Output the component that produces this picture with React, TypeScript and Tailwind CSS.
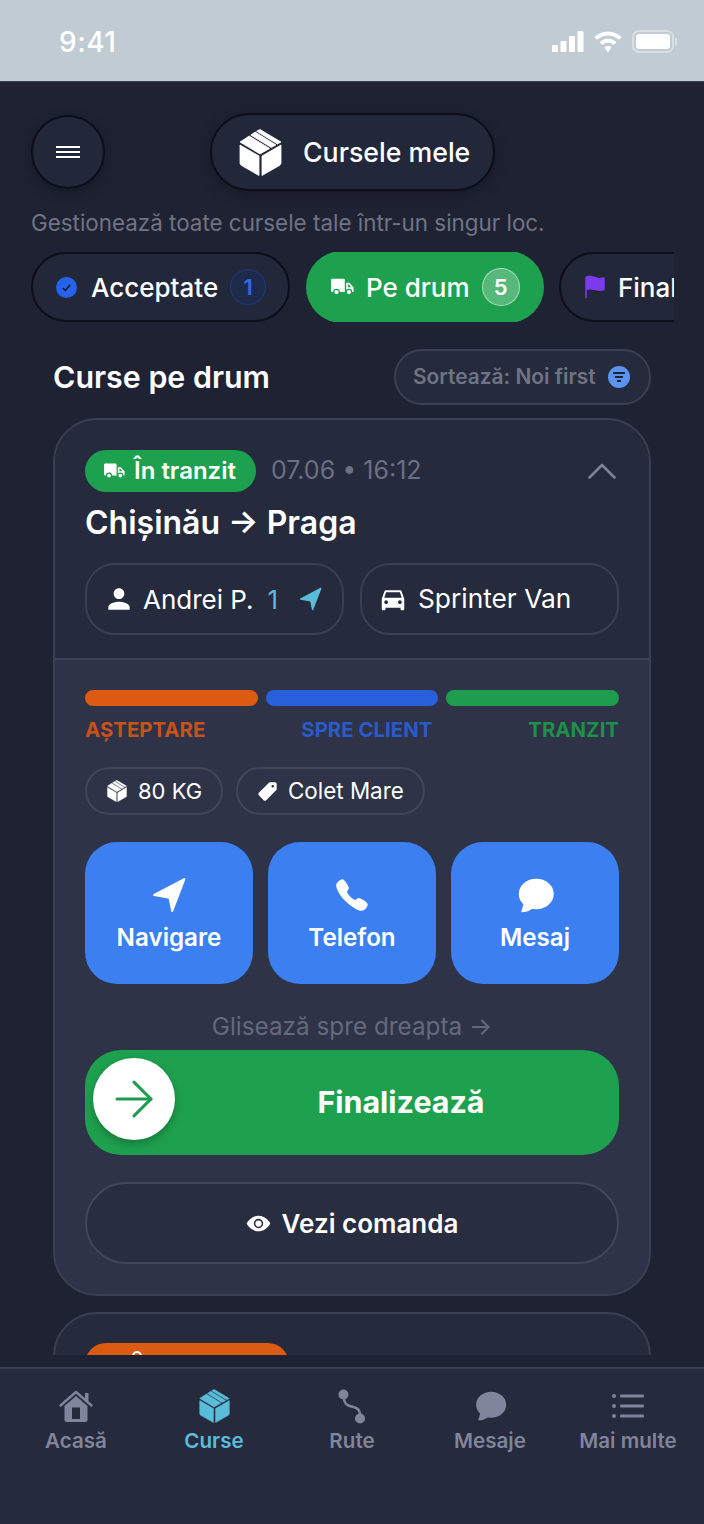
import React from 'react';
import { ArrowRight } from 'lucide-react';
import { IoCall, IoEye, IoFlag, IoPricetag } from 'react-icons/io5';
import { MdDirectionsCar, MdPerson } from 'react-icons/md';

const BoxIcon = ({ className }: { className?: string }) => (
  <svg viewBox="0 0 43 47" className={className} fill="currentColor" stroke="currentColor" strokeWidth="0.8" strokeLinejoin="round">
    <path d="M21 0.5 L42 13 L38.4 15 L17.6 2.2 Z" />
    <path d="M16.2 3.1 L37 15.9 L32.3 18.500 L11.800 6 Z" />
    <path d="M10.200 7 L30.700 19.500 L21 25 L1 13 Z" />
    <path d="M1 16 L20 27 V46.500 L2.500 36.500 Q1 35.600 1 34 Z" />
    <path d="M42 16 L23 27 V46.500 L40.500 36.500 Q42 35.600 42 34 Z" />
  </svg>
);

// small delivery truck, wheels are cut out with the colour behind it
const TruckIcon = ({ className, bg }: { className?: string; bg: string }) => (
  <svg viewBox="0 0 25 19" className={className} fill="#fff">
    <path d="M1.500 0.500 H13.500 Q15 0.500 15 2 V15 H1.500 Q0 15 0 13.500 V2 Q0 0.500 1.500 0.500 Z" />
    <path d="M16.500 5 H20 L24.500 10 V15 H16.500 Z" />
    <path d="M18.300 6.800 H19.500 L21.800 9.800 H18.300 Z" fill={bg} />
    <circle cx="6" cy="15" r="3" stroke={bg} strokeWidth="1.400" />
    <circle cx="19.500" cy="15" r="3" stroke={bg} strokeWidth="1.400" />
  </svg>
);

const ArrowIcon = ({ className }: { className?: string }) => (
  <svg viewBox="0 0 32 34" className={className} fill="currentColor" stroke="currentColor" strokeWidth="2" strokeLinejoin="round">
    <path d="M30.500 2 L2 17 L16.500 19.500 L19 32 Z" />
  </svg>
);

const ChatIcon = ({ className }: { className?: string }) => (
  <svg viewBox="0 0 24 23" className={className} fill="currentColor">
    <ellipse cx="12.500" cy="10.500" rx="11.500" ry="10" />
    <path d="M4.500 16 L2.500 22.500 Q7.500 22.500 10.500 19.500 Z" />
  </svg>
);

const HomeIcon = ({ className }: { className?: string }) => (
  <svg viewBox="0 0 34 32" className={className} fill="currentColor">
    <path d="M1.500 15.500 L17 2 L32.500 15.500" fill="none" stroke="currentColor" strokeWidth="2.400" strokeLinecap="round" strokeLinejoin="round" />
    <rect x="26" y="3" width="3.500" height="8" />
    <path d="M5.500 16 L17 6 L28.500 16 V30 Q28.500 32 26.500 32 H7.500 Q5.500 32 5.500 30 Z" />
    <rect x="13" y="17.500" width="8" height="11.500" fill="#252a3c" />
  </svg>
);

const RouteIcon = ({ className }: { className?: string }) => (
  <svg viewBox="0 0 28 35" className={className} fill="none">
    <circle cx="5.500" cy="5.500" r="5" fill="currentColor" />
    <circle cx="22" cy="29.500" r="5" fill="currentColor" />
    <path d="M6 10c.5 6 5 7 9.500 8 4.500 1 6.500 3 6.500 8" stroke="currentColor" strokeWidth="2.400" />
  </svg>
);

const ListIcon = ({ className }: { className?: string }) => (
  <svg viewBox="0 0 32 26" className={className} fill="currentColor">
    <circle cx="2" cy="3" r="2" />
    <circle cx="2" cy="13" r="2" />
    <circle cx="2" cy="23" r="2" />
    <rect x="8" y="1.600" width="24" height="2.800" rx="1" />
    <rect x="8" y="11.600" width="24" height="2.800" rx="1" />
    <rect x="8" y="21.600" width="24" height="2.800" rx="1" />
  </svg>
);

const StatusIcons = () => (
  <div className="flex items-center gap-[9px] text-white">
    <svg viewBox="0 0 32 21" className="w-[32px] h-[21px]" fill="currentColor">
      <rect x="0" y="14" width="6" height="7" rx="1.200" />
      <rect x="8.500" y="10" width="6" height="11" rx="1.200" />
      <rect x="17" y="5" width="6" height="16" rx="1.200" />
      <rect x="25.500" y="0" width="6" height="21" rx="1.200" />
    </svg>
    <svg viewBox="0 0 28 21" className="w-[30px] h-[22px]" fill="currentColor">
      <path d="M14 0.500c5 0 9.600 2 13 5.200l-2.500 2.700C21.800 5.800 18 4.200 14 4.200S6.200 5.800 3.500 8.400L1 5.700C4.400 2.500 9 0.500 14 0.500z" />
      <path d="M14 7.500c3.100 0 6 1.200 8.100 3.200l-2.600 2.700c-1.500-1.400-3.400-2.200-5.500-2.200s-4 .8-5.500 2.200l-2.600-2.700C8 8.700 10.900 7.500 14 7.500z" />
      <path d="M14 14.400c1.300 0 2.500.5 3.400 1.300L14 20.500l-3.400-4.800c.9-.8 2.100-1.300 3.400-1.300z" />
    </svg>
    <div className="flex items-center">
      <div className="w-[42px] h-[23px] rounded-[7px] border-2 border-white/40 p-[2px]">
        <div className="w-full h-full bg-white rounded-[3px]" />
      </div>
      <div className="w-[2px] h-[8px] bg-white/40 rounded-r ml-[1px]" />
    </div>
  </div>
);

const NavItem = ({ label, active, icon }: { label: string; active?: boolean; icon: React.ReactNode }) => (
  <div className={`flex-1 flex flex-col items-center ${active ? 'text-[#5bbcd9]' : 'text-[#80859b]'}`}>
    <div className="h-[36px] flex items-center justify-center">{icon}</div>
    <span className="mt-[5px] text-[20.6px] leading-[24px] font-semibold whitespace-nowrap">{label}</span>
  </div>
);

const ActionButton = ({ label, icon }: { label: string; icon: React.ReactNode }) => (
  <div className="flex-1 h-[142px] rounded-[32px] bg-[#3b7ff0] text-white flex flex-col items-center pt-[35px]">
    <div className="h-[36px] flex items-center justify-center">{icon}</div>
    <span className="mt-[10px] text-[24.2px] leading-[30px] font-semibold">{label}</span>
  </div>
);

export default function App() {
  return (
    <div className="w-[704px] h-[1524px] flex flex-col overflow-hidden bg-[#1f2233] text-white font-['Inter',sans-serif]">
      {/* status bar */}
      <div className="h-[82px] shrink-0 bg-[#c0cbd3] border-b border-[#3a4152] flex items-center justify-between pl-[59px] pr-[27px] pt-[2px]">
        <span className="text-[28px] font-medium tracking-[0.5px] text-white">9:41</span>
        <StatusIcons />
      </div>

      <div className="flex-1 min-h-0 mb-[12px] overflow-hidden">
        {/* header */}
        <div className="pt-[31px] pl-[31px] flex items-center">
          <div className="w-[74px] h-[74px] rounded-full border-2 border-[#0c0e18] bg-[#23273a] shadow-[0_4px_14px_rgba(0,0,0,0.3)] flex flex-col items-center justify-center gap-[3px]">
            <div className="w-[24px] h-[2px] bg-white" />
            <div className="w-[24px] h-[2px] bg-white" />
            <div className="w-[24px] h-[2px] bg-white" />
          </div>
          <div className="ml-[105px] w-[285px] h-[78px] rounded-full border-2 border-[#0c0e18] bg-[#23273a] shadow-[0_4px_14px_rgba(0,0,0,0.3)] flex items-center pl-[27px]">
            <BoxIcon className="w-[43px] h-[47px] text-white" />
            <span className="ml-[21px] text-[26.7px] font-medium text-white">Cursele mele</span>
          </div>
        </div>

        <p className="mt-[17px] pl-[31px] text-[22.4px] leading-[30px] text-[#6f7485] whitespace-nowrap">Gestionează toate cursele tale într-un singur loc.</p>

        {/* tabs */}
        <div className="mt-[14px] ml-[31px] mr-[30px] flex gap-[16px] overflow-hidden">
          <div className="shrink-0 w-[259px] h-[70px] rounded-full border-2 border-[#0c0e18] bg-[#23273a] flex items-center pl-[23px]">
            <div className="w-[21px] h-[21px] rounded-full bg-[#2563eb] flex items-center justify-center">
              <svg viewBox="0 0 12 12" className="w-[11px] h-[11px]" fill="none" stroke="#0f172a" strokeWidth="1.600"><path d="M2 6.500l2.800 2.800L10 3" /></svg>
            </div>
            <span className="ml-[14px] text-[26px] font-medium">Acceptate</span>
            <div className="ml-[12px] w-[36px] h-[36px] rounded-full border border-[#1e3a8a] bg-[#1e2a4a] text-[#2f6be0] text-[22px] font-semibold flex items-center justify-center">1</div>
          </div>
          <div className="shrink-0 w-[238px] h-[72px] -my-[1px] rounded-full bg-[#1ea14e] flex items-center pl-[25px]">
            <TruckIcon bg="#1ea14e" className="w-[23px] h-[18px]" />
            <span className="ml-[12px] text-[26px] font-medium">Pe drum</span>
            <div className="ml-[12px] w-[38px] h-[38px] rounded-full border border-white/50 bg-white/25 text-[22px] font-semibold flex items-center justify-center">5</div>
          </div>
          <div className="shrink-0 -ml-[1px] w-[220px] h-[70px] rounded-full border-2 border-[#0c0e18] bg-[#23273a] flex items-center pl-[21px]">
            <IoFlag className="w-[26px] h-[26px] text-[#7c3aed]" />
            <span className="ml-[10px] text-[26px] font-medium">Finalizate</span>
          </div>
        </div>

        <div className="mt-[27px] pl-[53px] pr-[53px] flex items-center justify-between">
          <h2 className="text-[30.4px] leading-[36px] font-semibold">Curse pe drum</h2>
          <div className="w-[257px] h-[56px] rounded-full border-2 border-[#3a3f52] bg-[#252a3c] flex items-center pl-[17px]">
            <span className="text-[20.9px] font-semibold text-[#6f7485] whitespace-nowrap">Sortează: Noi first</span>
            <div className="ml-[12px] w-[22px] h-[22px] rounded-full bg-[#5b93f0] flex flex-col items-center justify-center gap-[2px]">
              <div className="w-[12px] h-[2px] bg-[#1e2235]" />
              <div className="w-[8px] h-[2px] bg-[#1e2235]" />
              <div className="w-[4px] h-[2px] bg-[#1e2235]" />
            </div>
          </div>
        </div>

        {/* main card */}
        <div className="mt-[13px] mx-[53px] rounded-[44px] border-2 border-[#3a3f52] overflow-hidden bg-[#2e3347]">
          <div className="bg-[#252a3c] px-[30px] pt-[30px] pb-[23px] border-b-2 border-[#3e4357]">
            <div className="flex items-center">
              <div className="h-[42px] w-[171px] rounded-full bg-[#1ea14e] flex items-center pl-[19px]">
                <TruckIcon bg="#1ea14e" className="w-[21px] h-[16px]" />
                <span className="ml-[9px] text-[24px] font-semibold whitespace-nowrap">În tranzit</span>
              </div>
              <span className="ml-[15px] text-[25px] text-[#6b7083]">07.06 • 16:12</span>
              <svg viewBox="0 0 28 16" className="ml-auto mr-[3px] w-[28px] h-[16px]" fill="none" stroke="#7d8294" strokeWidth="2.600" strokeLinecap="round" strokeLinejoin="round">
                <path d="M1.500 14.500L14 2l12.500 12.500" />
              </svg>
            </div>
            <h3 className="mt-[10px] text-[32px] leading-[42px] font-semibold">Chișinău → Praga</h3>
            <div className="mt-[19px] flex gap-[16px]">
              <div className="flex-1 h-[72px] rounded-[30px] border-2 border-[#3a3f52] flex items-center pl-[16px]">
                <MdPerson className="w-[32px] h-[32px] text-white" />
                <span className="ml-[8px] text-[26px]">Andrei P.</span>
                <span className="ml-[14px] text-[26px] text-[#5bbcd9]">1</span>
                <ArrowIcon className="ml-[21px] w-[23px] h-[24px] text-[#5bbcd9]" />
              </div>
              <div className="flex-1 h-[72px] rounded-[30px] border-2 border-[#3a3f52] flex items-center pl-[16px]">
                <MdDirectionsCar className="w-[30px] h-[30px] text-white" />
                <span className="ml-[10px] text-[26.3px]">Sprinter Van</span>
              </div>
            </div>
          </div>

          <div className="px-[30px] pt-[30px] pb-[30px]">
            <div className="flex gap-[8px]">
              <div className="flex-1 h-[16px] rounded-full bg-[#dd5a12]" />
              <div className="flex-1 h-[16px] rounded-full bg-[#2a5fdb]" />
              <div className="flex-1 h-[16px] rounded-full bg-[#1f9d4f]" />
            </div>
            <div className="mt-[11px] flex justify-between text-[20.4px] leading-[26px] font-bold">
              <span className="text-[#c9511a]">AȘTEPTARE</span>
              <span className="text-[#2a5bc9]">SPRE CLIENT</span>
              <span className="text-[#1f8f49]">TRANZIT</span>
            </div>
            <div className="mt-[24px] flex gap-[13px]">
              <div className="h-[48px] w-[138px] rounded-full border-2 border-[#41465a] flex items-center pl-[20px]">
                <BoxIcon className="w-[20px] h-[22px] text-white" />
                <span className="ml-[11px] text-[22px]">80 KG</span>
              </div>
              <div className="h-[48px] w-[189px] rounded-full border-2 border-[#41465a] flex items-center pl-[19px]">
                <IoPricetag className="w-[21px] h-[21px] text-white" />
                <span className="ml-[10px] text-[22.4px]">Colet Mare</span>
              </div>
            </div>
            <div className="mt-[27px] flex gap-[15px]">
              <ActionButton label="Navigare" icon={<ArrowIcon className="w-[34px] h-[36px]" />} />
              <ActionButton label="Telefon" icon={<IoCall className="w-[36px] h-[36px]" />} />
              <ActionButton label="Mesaj" icon={<ChatIcon className="w-[37px] h-[35px]" />} />
            </div>
            <p className="mt-[26px] text-center text-[24.3px] leading-[32px] text-[#646a7e]">Glisează spre dreapta →</p>
            <div className="mt-[8px] relative h-[105px] rounded-[36px] bg-[#1ea14e] flex items-center justify-center pl-[98px]">
              <div className="absolute left-[8px] top-[8px] w-[82px] h-[82px] rounded-full bg-white shadow-[0_4px_10px_rgba(0,0,0,0.25)] flex items-center justify-center">
                <ArrowRight className="w-[58px] h-[58px] text-[#1f9d4f]" strokeWidth={1.300} />
              </div>
              <span className="text-[30.4px] font-bold">Finalizează</span>
            </div>
            <div className="mt-[27px] h-[82px] rounded-full border-2 border-[#41465a] bg-[#282d40] flex items-center justify-center">
              <IoEye className="w-[25px] h-[25px] text-white" />
              <span className="ml-[11px] text-[26px] font-semibold">Vezi comanda</span>
            </div>
          </div>
        </div>

        {/* next card, cut off by the nav */}
        <div className="mt-[16px] mx-[53px] h-[200px] rounded-[44px] border-2 border-[#3a3f52] bg-[#252a3c] px-[30px] pt-[29px]">
          <div className="h-[42px] w-[204px] rounded-full bg-[#dd5a12] pl-[47px] pt-[8px]">
            <div className="w-[10px] h-[10px] rounded-full border-2 border-white" />
          </div>
        </div>
      </div>

      {/* bottom nav */}
      <div className="h-[157px] shrink-0 bg-[#252a3c] border-t-2 border-[#3a3f52] flex px-[7px] pt-[19px]">
        <NavItem label="Acasă" icon={<HomeIcon className="w-[34px] h-[32px]" />} />
        <NavItem label="Curse" active icon={<BoxIcon className="w-[31px] h-[34px]" />} />
        <NavItem label="Rute" icon={<RouteIcon className="w-[28px] h-[35px]" />} />
        <NavItem label="Mesaje" icon={<ChatIcon className="w-[33px] h-[30px]" />} />
        <NavItem label="Mai multe" icon={<ListIcon className="w-[32px] h-[26px]" />} />
      </div>
    </div>
  );
}
